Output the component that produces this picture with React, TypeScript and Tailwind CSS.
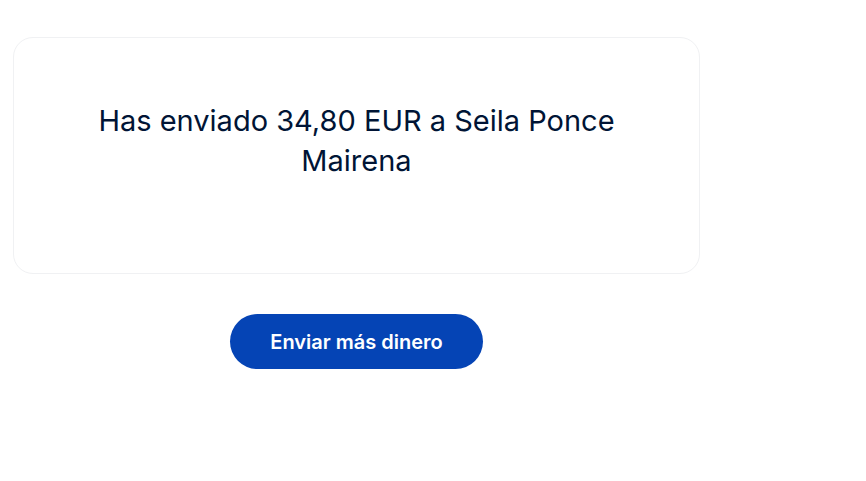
export default function App() {
  return (
    <main className="min-h-screen bg-white pl-[13px] pt-[37px] font-['Inter',sans-serif]">
      <div className="flex w-full max-w-[687px] flex-col items-center gap-10">
        <section className="w-full rounded-[20px] border border-[#f0f1f3] px-16 pt-[63px] pb-[92px]">
          <h1 className="text-center text-[29px] leading-10 text-[#001435]">
            Has enviado 34,80 EUR a Seila Ponce Mairena
          </h1>
        </section>
        <button
          type="button"
          className="h-[55px] rounded-full bg-[#0544b5] px-10 text-[20px] font-semibold text-white"
        >
          Enviar más dinero
        </button>
      </div>
    </main>
  );
}
